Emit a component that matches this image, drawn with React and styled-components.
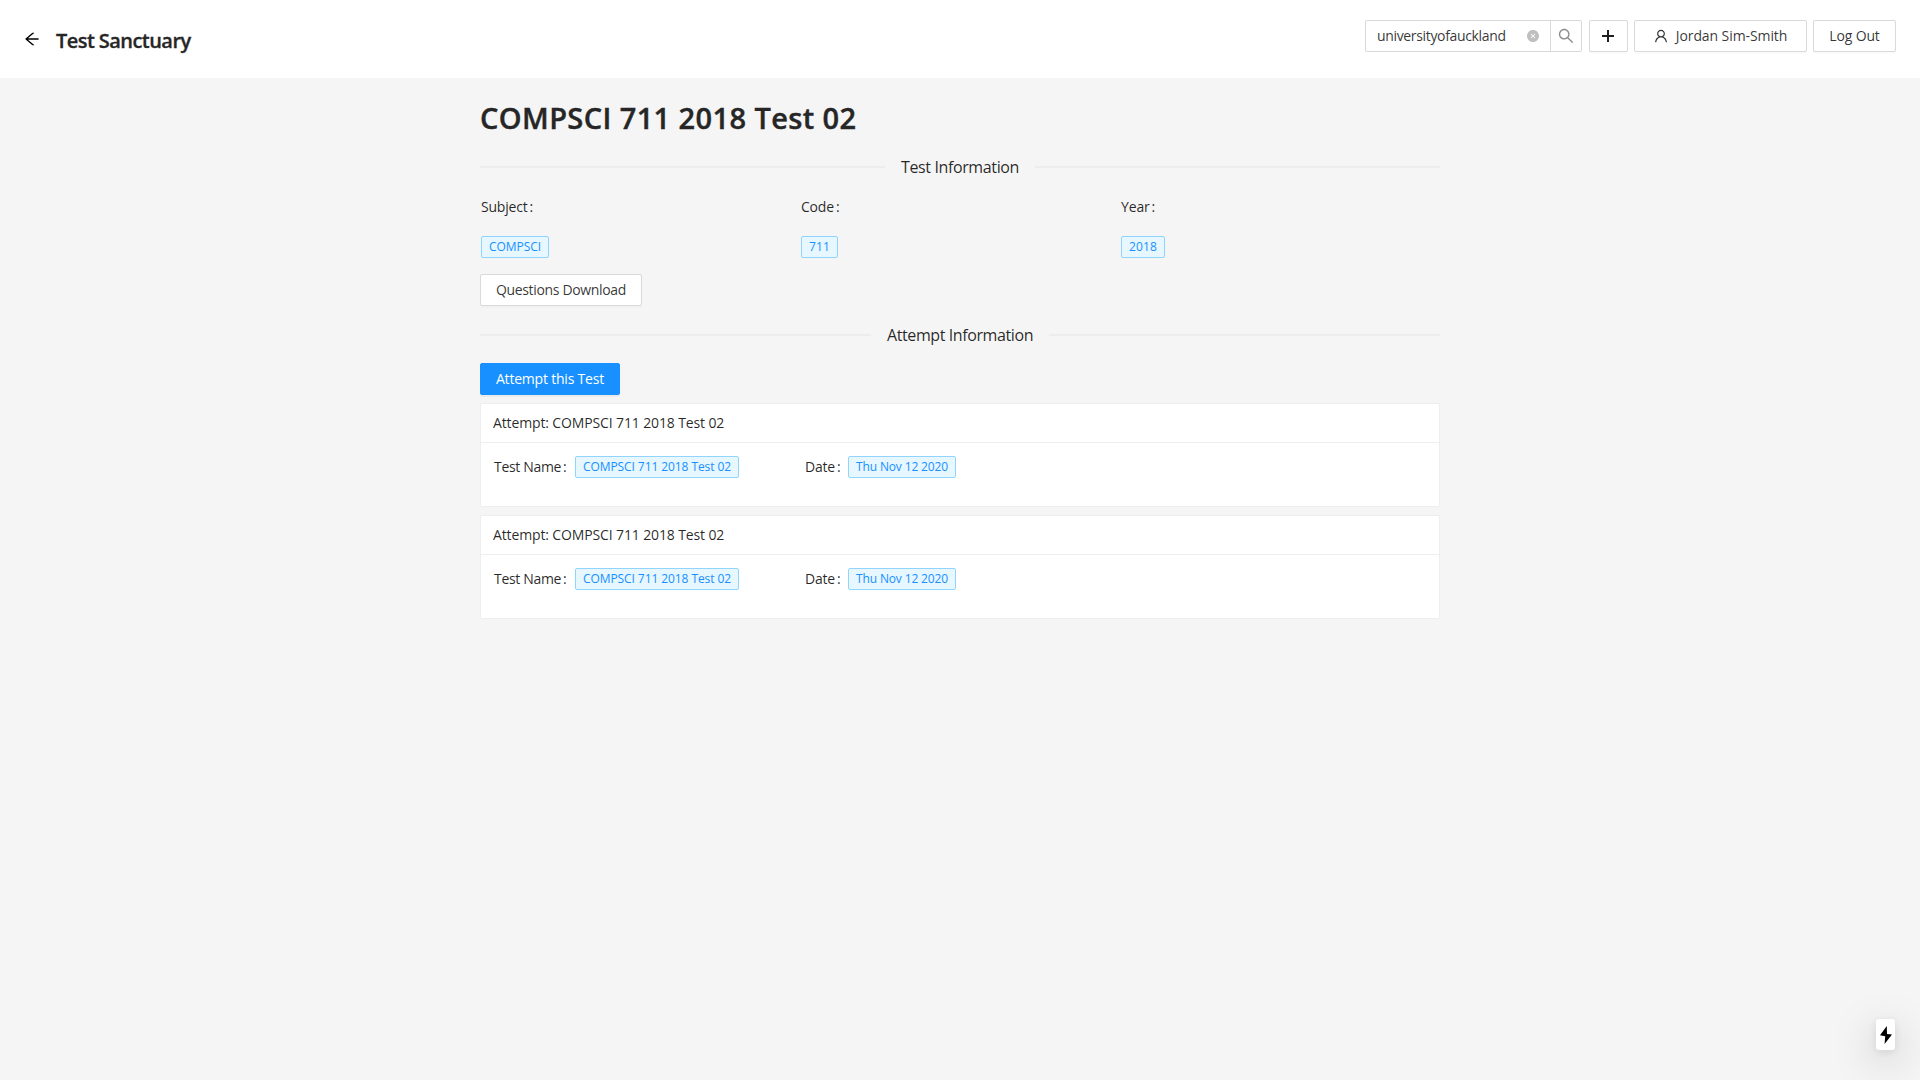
import React from "react";
import styled, { createGlobalStyle } from "styled-components";
import {
  AiFillCloseCircle,
  AiOutlineArrowLeft,
  AiOutlineSearch,
  AiOutlineUser,
} from "react-icons/ai";

const GlobalStyle = createGlobalStyle`
  *, *::before, *::after { box-sizing: border-box; }
  body {
    margin: 0;
    min-height: 100vh;
    background: #f5f5f5;
    color: rgba(0, 0, 0, 0.85);
    font: 14px/22px "Open Sans", "Noto Sans", sans-serif;
  }
  svg { display: block; flex: none; }
`;

const ICON_BOX = "64 64 896 896";

const Label = styled.span`
  letter-spacing: ${(p) => p.$track || 0}px;
  white-space: nowrap;
`;

const Header = styled.header`
  display: flex;
  justify-content: space-between;
  align-items: flex-start;
  height: 78px;
  padding: 20px 24px 0;
  background: #fff;
`;

const Brand = styled.div`
  display: flex;
  align-items: center;
  gap: 16px;
  height: 38px;
  color: #000;
`;

const BrandTitle = styled.span`
  padding-top: 3px;
  font-size: 20px;
  font-weight: 600;
  line-height: 32px;
  letter-spacing: -0.56px;
  color: #262626;
  -webkit-text-stroke: 0.3px #262626;
`;

const Actions = styled.div`
  display: flex;
`;

const SearchGroup = styled.div`
  display: flex;
  width: 217px;
  height: 32px;
  margin-right: 7px;
  background: #fff;
  border: 1px solid #d9d9d9;
  border-radius: 2px;
`;

const SearchField = styled.div`
  display: flex;
  align-items: center;
  justify-content: space-between;
  flex: 1;
  padding: 0 11px;
  color: rgba(0, 0, 0, 0.8);
`;

const ClearIcon = styled(AiFillCloseCircle)`
  color: rgba(0, 0, 0, 0.25);
`;

const SearchButton = styled.div`
  display: flex;
  align-items: center;
  justify-content: center;
  width: 31px;
  border-left: 1px solid #d9d9d9;
  color: rgba(0, 0, 0, 0.45);
`;

const Button = styled.button`
  display: flex;
  align-items: center;
  justify-content: center;
  gap: 8px;
  width: ${(p) => p.$width}px;
  height: 32px;
  margin: 0 ${(p) => p.$after || 0}px 0 0;
  padding: 0 0 1px;
  font: inherit;
  color: ${(p) => (p.$primary ? "#fff" : "rgba(0, 0, 0, 0.8)")};
  background: ${(p) => (p.$primary ? "#1890ff" : "#fff")};
  border: 1px solid ${(p) => (p.$primary ? "#1890ff" : "#d9d9d9")};
  border-radius: 2px;
  box-shadow: 0 2px 0 rgba(0, 0, 0, ${(p) => (p.$primary ? 0.045 : 0.016)});
`;

const Page = styled.main`
  width: 960px;
  margin: 0 auto;
  padding-top: 16px;
`;

const PageTitle = styled.h1`
  margin: 0;
  height: 50px;
  font-size: 29px;
  font-weight: 600;
  line-height: 47px;
  letter-spacing: 0.4px;
  white-space: nowrap;
  color: #262626;
  -webkit-text-stroke: 0.4px #262626;
`;

const SectionDivider = styled.div`
  display: flex;
  align-items: center;
  gap: 16px;
  height: 24px;
  margin: ${(p) => p.$margin};
  font-size: 16px;
  line-height: 24px;

  &::before,
  &::after {
    content: "";
    flex: 1;
    height: 2px;
    background: #ededed;
  }
`;

const DividerText = styled.span`
  flex: none;
  width: ${(p) => p.$width}px;
  letter-spacing: ${(p) => p.$track}px;
  white-space: nowrap;
`;

const InfoGrid = styled.div`
  display: grid;
  grid-template-columns: repeat(3, 320px);
  padding-left: 1px;
`;

const InfoCell = styled.div`
  display: flex;
  flex-direction: column;
  align-items: flex-start;
  gap: 18px;
`;

const FieldName = styled.span`
  letter-spacing: ${(p) => p.$track}px;
  white-space: nowrap;

  &::after {
    content: ":";
    margin: 0 8px 0 2px;
    letter-spacing: 0;
  }
`;

const Tag = styled.span`
  display: block;
  width: ${(p) => p.$width}px;
  height: 22px;
  padding: 0 7px;
  font-size: 12px;
  line-height: 20px;
  letter-spacing: ${(p) => p.$track}px;
  white-space: nowrap;
  color: #1890ff;
  background: #e6f7ff;
  border: 1px solid #91d5ff;
  border-radius: 2px;
`;

const DownloadRow = styled.div`
  padding-top: 16px;
`;

const AttemptList = styled.div`
  display: grid;
  gap: 8px;
  margin-top: 8px;
`;

const Card = styled.section`
  height: 104px;
  background: #fff;
  border: 1px solid #eeeeee;
  border-radius: 2px;
`;

const CardHead = styled.div`
  height: 39px;
  padding: 0 12px;
  line-height: 37px;
  border-bottom: 1px solid #eeeeee;
`;

const CardBody = styled.div`
  display: grid;
  grid-template-columns: 311px 1fr;
  padding: 13px 12px 0 13px;
`;

const Field = styled.div`
  display: flex;
  align-items: center;
`;

const FieldLabelBox = styled.div`
  width: ${(p) => p.$width}px;
`;

const QuickAction = styled.div`
  position: fixed;
  right: 25px;
  bottom: 30px;
  display: flex;
  align-items: center;
  justify-content: center;
  width: 19px;
  height: 31px;
  background: #fff;
  border-radius: 3px;
  box-shadow: 0 11px 40px rgba(0, 0, 0, 0.25), 0 2px 10px rgba(0, 0, 0, 0.1);
`;

const info = [
  { name: "Subject", track: -0.2, value: "COMPSCI", width: 68, valueTrack: -0.06 },
  { name: "Code", track: -0.2, value: "711", width: 37, valueTrack: 0.15 },
  { name: "Year", track: -0.15, value: "2018", width: 44, valueTrack: 0.15 },
];

const attempts = [
  { id: 1, test: "COMPSCI 711 2018 Test 02", date: "Thu Nov 12 2020" },
  { id: 2, test: "COMPSCI 711 2018 Test 02", date: "Thu Nov 12 2020" },
];

function PlusIcon() {
  return (
    <svg width="13" height="12" viewBox="0 0 13 12">
      <path d="M0 5h12v2H0zM5 0h2v12H5z" fill="#000" fillOpacity="0.88" />
    </svg>
  );
}

function TopBar() {
  return (
    <Header>
      <Brand>
        <AiOutlineArrowLeft size={16} viewBox={ICON_BOX} />
        <BrandTitle>Test Sanctuary</BrandTitle>
      </Brand>
      <Actions>
        <SearchGroup>
          <SearchField>
            <Label $track={-0.34}>universityofauckland</Label>
            <ClearIcon size={12} viewBox={ICON_BOX} />
          </SearchField>
          <SearchButton>
            <AiOutlineSearch size={16} viewBox={ICON_BOX} />
          </SearchButton>
        </SearchGroup>
        <Button $width={39} $after={6} aria-label="Add">
          <PlusIcon />
        </Button>
        <Button $width={173} $after={6}>
          <AiOutlineUser size={14} viewBox={ICON_BOX} />
          <Label $track={-0.09}>Jordan Sim-Smith</Label>
        </Button>
        <Button $width={83}>
          <Label $track={-0.15}>Log Out</Label>
        </Button>
      </Actions>
    </Header>
  );
}

function AttemptCard({ test, date }) {
  return (
    <Card>
      <CardHead>
        <Label $track={-0.13}>Attempt: {test}</Label>
      </CardHead>
      <CardBody>
        <Field>
          <FieldLabelBox $width={81}>
            <FieldName $track={-0.33}>Test Name</FieldName>
          </FieldLabelBox>
          <Tag $width={164} $track={-0.08}>{test}</Tag>
        </Field>
        <Field>
          <FieldLabelBox $width={43}>
            <FieldName $track={-0.2}>Date</FieldName>
          </FieldLabelBox>
          <Tag $width={108} $track={-0.14}>{date}</Tag>
        </Field>
      </CardBody>
    </Card>
  );
}

export default function App() {
  return (
    <>
      <GlobalStyle />
      <TopBar />
      <Page>
        <PageTitle>COMPSCI 711 2018 Test 02</PageTitle>
        <SectionDivider $margin="11px 0 17px">
          <DividerText $width={118} $track={-0.375}>Test Information</DividerText>
        </SectionDivider>
        <InfoGrid>
          {info.map((item) => (
            <InfoCell key={item.name}>
              <FieldName $track={item.track}>{item.name}</FieldName>
              <Tag $width={item.width} $track={item.valueTrack}>{item.value}</Tag>
            </InfoCell>
          ))}
        </InfoGrid>
        <DownloadRow>
          <Button $width={162}>
            <Label $track={-0.34}>Questions Download</Label>
          </Button>
        </DownloadRow>
        <SectionDivider $margin="17px 0 16px">
          <DividerText $width={146} $track={-0.4}>Attempt Information</DividerText>
        </SectionDivider>
        <Button $primary $width={140}>
          <Label $track={-0.2}>Attempt this Test</Label>
        </Button>
        <AttemptList>
          {attempts.map((a) => (
            <AttemptCard key={a.id} test={a.test} date={a.date} />
          ))}
        </AttemptList>
      </Page>
      <QuickAction>
        <svg width="12" height="18" viewBox="0 0 12 18">
          <path d="M6.8 0L0 9.2l5.2 1L4.6 18 12 8.5 7 8z" fill="#000" />
        </svg>
      </QuickAction>
    </>
  );
}
